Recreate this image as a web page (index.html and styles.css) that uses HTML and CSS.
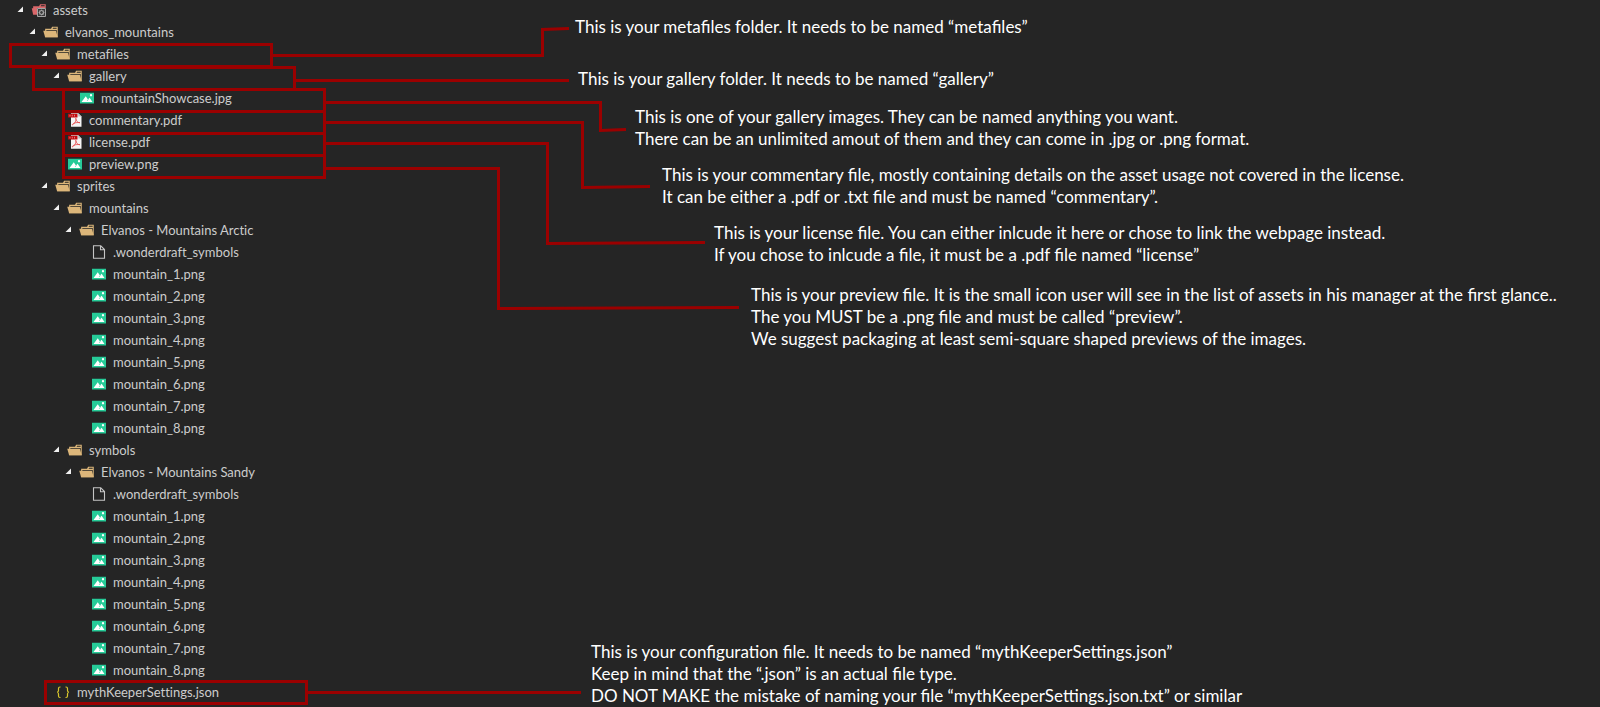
FILE: index.html
```html
<!DOCTYPE html>
<html lang="en">
<head>
<meta charset="utf-8">
<title>Asset package structure</title>
<link rel="stylesheet" href="styles.css">
</head>
<body>
<svg class="sprite" aria-hidden="true">
  <symbol id="chevron" viewBox="0 0 14 20"><path d="M6 6.5V12H.5z" fill="#f0f0f0"/></symbol>
  <symbol id="folder" viewBox="0 0 32 32">
    <path d="M27.4 5.5H18.2L16.1 9.7H4.3V26.5H29.5V5.5Zm0 18.7H6.6V11.8H27.4Zm0-14.5H19.2l1-2.1h7.1V9.7Z" fill="#dcb67a"/>
    <path d="M25.7 13.7H.5L4.3 26.5H29.5Z" fill="#dcb67a"/>
  </symbol>
  <symbol id="assets" viewBox="0 0 32 32">
    <path d="M27.4 4.5H18.2L16.1 8.7H4.3v4H1.5L4.3 25.5H12V13h17.5V4.5Zm0 4.2H19.2l1-2.1h7.1Z" fill="#d9686b"/>
    <path d="M12 12h18v18H12z" fill="#252525"/>
    <path d="M13 13h16v16H13z" fill="#3a3a3a" stroke="#a3a3a3" stroke-width="2"/>
    <circle cx="21" cy="21" r="4" fill="none" stroke="#a3a3a3" stroke-width="2.4"/>
    <path d="M21 15v3M21 24v3M15 21h3M24 21h3M17 17l2 2M23 23l2 2M25 17l-2 2M19 23l-2 2" stroke="#a3a3a3" stroke-width="1.4"/>
  </symbol>
  <symbol id="image" viewBox="0 0 32 32">
    <path d="M2 5.5H30V27H2z" fill="#26cb98"/>
    <circle cx="24" cy="10.5" r="2.3" fill="#fff"/>
    <path d="M5 24L13.5 12.5 18 19l3.2-3.6L27 24z" fill="#fff"/>
    <path d="M16.5 21.5l2-2.6" stroke="#26cb98" stroke-width="1.4"/>
  </symbol>
  <symbol id="pdf" viewBox="0 0 32 32">
    <path d="M8 2.5H22.5L29 9V29.5H8z" fill="#f4f4f4"/>
    <path d="M22.5 2.5V9H29z" fill="#b9b9b9"/>
    <path d="M2 3.5H21V11H2z" fill="#c4090d"/>
    <path d="M6 5.5v3.5M10.5 5.5v3.5M15 5.5v3.5" stroke="#e79798" stroke-width="1.6"/>
    <path d="M17.5 12.5c2 4-2.500 11-6.500 13.500-1.500-2.500 5-5.500 15-5-2 2-7.500-2-8.500-8.500z" fill="none" stroke="#e3393c" stroke-width="1.5"/>
  </symbol>
  <symbol id="file" viewBox="0 0 32 32">
    <path d="M5 3.500H19.500L27 11V28.500H5z M19 4V11.500H27" fill="none" stroke="#c5c5c5" stroke-width="2.200"/>
  </symbol>
  <symbol id="json" viewBox="0 0 32 32">
    <path d="M11 6H10Q7 6 7 9V13Q7 16.500 4 16.500 7 16.500 7 20V24Q7 27 10 27H11M21 6H22Q25 6 25 9V13Q25 16.500 28 16.500 25 16.500 25 20V24Q25 27 22 27H21" fill="none" stroke="#d8c62c" stroke-width="2.400"/>
  </symbol>
</svg>

<main class="guide">
  <nav class="tree" aria-label="Asset files">
    <ul>
      <li><button class="row" aria-expanded="true"><svg class="chevron"><use href="#chevron"/></svg><svg class="icon"><use href="#assets"/></svg>assets</button>
        <ul>
          <li><button class="row" aria-expanded="true"><svg class="chevron"><use href="#chevron"/></svg><svg class="icon"><use href="#folder"/></svg>elvanos_mountains</button>
            <ul>
              <li><button class="row" aria-expanded="true"><svg class="chevron"><use href="#chevron"/></svg><svg class="icon"><use href="#folder"/></svg>metafiles</button>
                <ul>
                  <li><button class="row" aria-expanded="true"><svg class="chevron"><use href="#chevron"/></svg><svg class="icon"><use href="#folder"/></svg>gallery</button>
                    <ul>
                      <li class="row file"><svg class="icon"><use href="#image"/></svg>mountainShowcase.jpg</li>
                    </ul>
                  </li>
                  <li class="row file"><svg class="icon"><use href="#pdf"/></svg>commentary.pdf</li>
                  <li class="row file"><svg class="icon"><use href="#pdf"/></svg>license.pdf</li>
                  <li class="row file"><svg class="icon"><use href="#image"/></svg>preview.png</li>
                </ul>
              </li>
              <li><button class="row" aria-expanded="true"><svg class="chevron"><use href="#chevron"/></svg><svg class="icon"><use href="#folder"/></svg>sprites</button>
                <ul>
                  <li><button class="row" aria-expanded="true"><svg class="chevron"><use href="#chevron"/></svg><svg class="icon"><use href="#folder"/></svg>mountains</button>
                    <ul>
                      <li><button class="row" aria-expanded="true"><svg class="chevron"><use href="#chevron"/></svg><svg class="icon"><use href="#folder"/></svg>Elvanos - Mountains Arctic</button>
                        <ul>
                          <li class="row file"><svg class="icon"><use href="#file"/></svg>.wonderdraft_symbols</li>
                          <li class="row file"><svg class="icon"><use href="#image"/></svg>mountain_1.png</li>
                          <li class="row file"><svg class="icon"><use href="#image"/></svg>mountain_2.png</li>
                          <li class="row file"><svg class="icon"><use href="#image"/></svg>mountain_3.png</li>
                          <li class="row file"><svg class="icon"><use href="#image"/></svg>mountain_4.png</li>
                          <li class="row file"><svg class="icon"><use href="#image"/></svg>mountain_5.png</li>
                          <li class="row file"><svg class="icon"><use href="#image"/></svg>mountain_6.png</li>
                          <li class="row file"><svg class="icon"><use href="#image"/></svg>mountain_7.png</li>
                          <li class="row file"><svg class="icon"><use href="#image"/></svg>mountain_8.png</li>
                        </ul>
                      </li>
                    </ul>
                  </li>
                  <li><button class="row" aria-expanded="true"><svg class="chevron"><use href="#chevron"/></svg><svg class="icon"><use href="#folder"/></svg>symbols</button>
                    <ul>
                      <li><button class="row" aria-expanded="true"><svg class="chevron"><use href="#chevron"/></svg><svg class="icon"><use href="#folder"/></svg>Elvanos - Mountains Sandy</button>
                        <ul>
                          <li class="row file"><svg class="icon"><use href="#file"/></svg>.wonderdraft_symbols</li>
                          <li class="row file"><svg class="icon"><use href="#image"/></svg>mountain_1.png</li>
                          <li class="row file"><svg class="icon"><use href="#image"/></svg>mountain_2.png</li>
                          <li class="row file"><svg class="icon"><use href="#image"/></svg>mountain_3.png</li>
                          <li class="row file"><svg class="icon"><use href="#image"/></svg>mountain_4.png</li>
                          <li class="row file"><svg class="icon"><use href="#image"/></svg>mountain_5.png</li>
                          <li class="row file"><svg class="icon"><use href="#image"/></svg>mountain_6.png</li>
                          <li class="row file"><svg class="icon"><use href="#image"/></svg>mountain_7.png</li>
                          <li class="row file"><svg class="icon"><use href="#image"/></svg>mountain_8.png</li>
                        </ul>
                      </li>
                    </ul>
                  </li>
                </ul>
              </li>
              <li class="row file"><svg class="icon"><use href="#json"/></svg>mythKeeperSettings.json</li>
            </ul>
          </li>
        </ul>
      </li>
    </ul>
  </nav>

  <section class="notes" aria-label="Notes">
    <p class="note note-metafiles">This is your metafiles folder. It needs to be named “metafiles”</p>
    <p class="note note-gallery">This is your gallery folder. It needs to be named “gallery”</p>
    <p class="note note-images">This is one of your gallery images. They can be named anything you want.<br>There can be an unlimited amout of them and they can come in .jpg or .png format.</p>
    <p class="note note-commentary">This is your commentary file, mostly containing details on the asset usage not covered in the license.<br>It can be either a .pdf or .txt file and must be named “commentary”.</p>
    <p class="note note-license">This is your license file. You can either inlcude it here or chose to link the webpage instead.<br>If you chose to inlcude a file, it must be a .pdf file named “license”</p>
    <p class="note note-preview">This is your preview file. It is the small icon user will see in the list of assets in his manager at the first glance..<br>The you MUST be a .png file and must be called “preview”.<br>We suggest packaging at least semi-square shaped previews of the images.</p>
    <p class="note note-config">This is your configuration file. It needs to be named “mythKeeperSettings.json”<br>Keep in mind that the “.json” is an actual file type.<br>DO NOT MAKE the mistake of naming your file “mythKeeperSettings.json.txt” or similar</p>
  </section>

  <!-- Row outlines and the lines that lead to the notes -->
  <svg class="callouts" aria-hidden="true">
    <rect x="10.500" y="44.500" width="261" height="22"/>
    <rect x="33.500" y="67.500" width="261" height="22"/>
    <rect x="63.500" y="89.500" width="261" height="88"/>
    <path d="M63 111.500H325M63 133.500H325M63 155.500H325"/>
    <rect x="45.500" y="681.500" width="261" height="22"/>
    <path d="M272 55.500H542.500V29.500L569 28.500"/>
    <path d="M295 80.500H569"/>
    <path d="M325 102.500H600.500V130.500L626 129.500"/>
    <path d="M325 122.500H582.500V187.500L650 186.500"/>
    <path d="M325 143.500H547.500V243.500L705 242.500"/>
    <path d="M325 168.500H498.500V308.500L739 307.500"/>
    <path d="M307 692.500H581"/>
  </svg>
</main>
</body>
</html>
```
FILE: styles.css
```css
* {
  box-sizing: border-box;
}

body {
  margin: 0;
  background: #252525;
  color: #fff;
  font-family: Lato, "Open Sans", sans-serif;
}

.sprite {
  display: none;
}

.guide {
  position: relative;
  display: grid;
  grid-template-columns: 575px 1fr;
  min-height: 100vh;
}

.tree {
  padding-left: 17px;
  color: #ccc;
  font-size: 13px;
  font-variant-ligatures: none;
}

.tree ul {
  margin: 0;
  padding: 0;
  list-style: none;
}

.tree ul ul {
  padding-left: 12px;
}

.row {
  display: flex;
  align-items: center;
  width: 100%;
  height: 22px;
  padding: 0 0 2px;
  border: 0;
  background: none;
  color: inherit;
  font: inherit;
  line-height: 20px;
  text-align: left;
  white-space: nowrap;
}

.file {
  padding-left: 14px;
}

.chevron {
  flex: none;
  width: 14px;
  height: 20px;
}

.icon {
  flex: none;
  width: 16px;
  height: 16px;
  margin-right: 6px;
}

.notes {
  display: flex;
  flex-direction: column;
  padding-top: 16px;
  font-size: 17px;
  line-height: 22px;
}

.note {
  margin: 0;
}

.note-gallery {
  margin: 30px 0 0 3px;
}

.note-images {
  margin: 16px 0 0 60px;
}

.note-commentary {
  margin: 14px 0 0 87px;
}

.note-license {
  margin: 14px 0 0 139px;
}

.note-preview {
  margin: 18px 0 0 176px;
}

.note-config {
  margin: auto 0 0 16px;
}

.callouts {
  position: absolute;
  top: 0;
  left: 0;
  width: 100%;
  height: 100%;
  fill: none;
  stroke: #9b0000;
  stroke-width: 3px;
  pointer-events: none;
}
```
